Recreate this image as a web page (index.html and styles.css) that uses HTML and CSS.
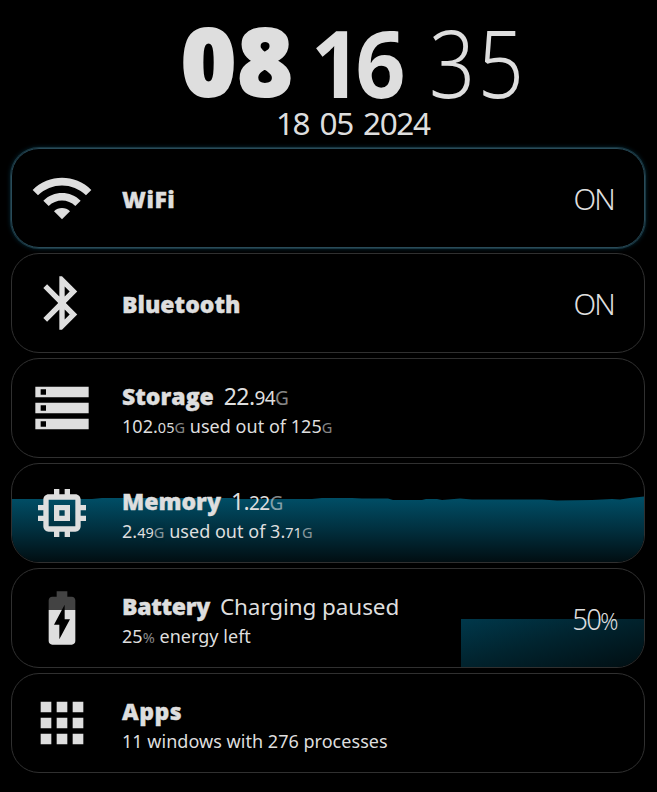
FILE: index.html
```html
<!DOCTYPE html>
<html lang="en">
<head>
<meta charset="utf-8">
<title>System panel</title>
<link rel="stylesheet" href="styles.css">
</head>
<body>
<header class="clock">
  <div class="time"><span class="hours">08</span><span class="minutes">16</span><span class="seconds">35</span></div>
  <div class="date">18 05 2024</div>
</header>
<main class="cards">
  <section class="card active">
    <svg class="icon" viewBox="0 0 24 24"><path d="M1 9l2 2c4.97-4.97 13.03-4.97 18 0l2-2C16.93 2.93 7.08 2.93 1 9zm8 8l3 3 3-3c-1.65-1.66-4.34-1.66-6 0zm-4-4l2 2c2.76-2.76 7.24-2.76 10 0l2-2C15.14 9.14 8.87 9.14 5 13z"/></svg>
    <div class="info"><div class="line"><b class="wifi">WiFi</b></div></div>
    <div class="state">ON</div>
  </section>
  <section class="card">
    <svg class="icon" viewBox="0 0 24 24"><path d="M17.71 7.71L12 2h-1v7.59L6.41 5 5 6.41 10.59 12 5 17.59 6.41 19 11 14.41V22h1l5.71-5.71-4.3-4.29 4.3-4.29zM13 5.83l1.88 1.88L13 9.59V5.83zm1.88 10.46L13 18.17v-3.76l1.88 1.88z"/></svg>
    <div class="info"><div class="line"><b class="bluetooth">Bluetooth</b></div></div>
    <div class="state">ON</div>
  </section>
  <section class="card">
    <svg class="icon" viewBox="0 0 24 24"><path d="M2 20h20v-4H2v4zm2-3h2v2H4v-2zM2 4v4h20V4H2zm4 3H4V5h2v2zm-4 7h20v-4H2v4zm2-3h2v2H4v-2z"/></svg>
    <div class="info">
      <div class="line"><b class="storage">Storage</b><span class="value">22.<small>94<i>G</i></small></span></div>
      <div class="detail">102.<small>05<i>G</i></small> used out of 125<small><i>G</i></small></div>
    </div>
  </section>
  <section class="card">
    <svg class="graph" viewBox="0 0 632 98" preserveAspectRatio="none">
      <defs><linearGradient id="memory-fill" x1="0" y1="34" x2="0" y2="98" gradientUnits="userSpaceOnUse"><stop offset="0" stop-color="#004e66"/><stop offset=".5" stop-color="#012f3e"/><stop offset="1" stop-color="#010e12"/></linearGradient></defs>
      <path fill="url(#memory-fill)" d="M0 35H80L90 34H220L224 35H300L310 34H340L350 34.5H376L381 36H410L414 35H425L430 36L448 34.5L460 35.5H530L545 36.5L580 36L600 35L608 35.5L618 34L632 32.500V98H0Z"/>
    </svg>
    <svg class="icon" viewBox="0 0 24 24"><path d="M15 9H9v6h6V9zm-2 4h-2v-2h2v2zm8-2V9h-2V7c0-1.100-.9-2-2-2h-2V3h-2v2h-2V3H9v2H7c-1.100 0-2 .9-2 2v2H3v2h2v2H3v2h2v2c0 1.100.9 2 2 2h2v2h2v-2h2v2h2v-2h2c1.100 0 2-.9 2-2v-2h2v-2h-2v-2h2zm-4 6H7V7h10v10z"/></svg>
    <div class="info">
      <div class="line"><b class="memory">Memory</b><span class="value">1.<small>22<i>G</i></small></span></div>
      <div class="detail">2.<small>49<i>G</i></small> used out of 3.<small>71<i>G</i></small></div>
    </div>
  </section>
  <section class="card">
    <div class="level"></div>
    <svg class="icon" viewBox="0 0 24 24"><path opacity=".3" d="M15.670 4H14V2h-4v2H8.330C7.600 4 7 4.600 7 5.330V9h4.930L13 7v2h4V5.330C17 4.600 16.400 4 15.670 4z"/><path d="M13 12.500h2L11 20v-5.500H9L11.930 9H7v11.670C7 21.400 7.600 22 8.330 22h7.330c.74 0 1.340-.6 1.340-1.330V9h-4v3.500z"/></svg>
    <div class="info">
      <div class="line"><b class="battery">Battery</b><span class="value words">Charging paused</span></div>
      <div class="detail">25<small><i>%</i></small> energy left</div>
    </div>
    <div class="state percent">50<small>%</small></div>
  </section>
  <section class="card">
    <svg class="icon" viewBox="0 0 24 24"><path d="M4 8h4V4H4v4zm6 12h4v-4h-4v4zm-6 0h4v-4H4v4zm0-6h4v-4H4v4zm6 0h4v-4h-4v4zm6-10v4h4V4h-4zm-6 4h4V4h-4v4zm6 6h4v-4h-4v4zm0 6h4v-4h-4v4z"/></svg>
    <div class="info">
      <div class="line"><b class="apps">Apps</b></div>
      <div class="detail">11 windows with 276 processes</div>
    </div>
  </section>
</main>
</body>
</html>
```
FILE: styles.css
```css
* { box-sizing: border-box; }
body { margin: 0; height: 792px; background: #000; color: #dedede; font-family: "Noto Sans", "Open Sans", sans-serif; }
.clock { height: 148px; padding-top: 10px; }
.time { display: flex; height: 95px; padding-left: 181px; font-size: 94px; line-height: 104px; }
.time span { flex: none; white-space: nowrap; }
.hours { width: 130px; margin-top: -2px; font-family: "Open Sans", sans-serif; font-weight: 800; letter-spacing: 1.500px; -webkit-text-stroke: 2px #dedede; }
.minutes { width: 118px; font-weight: 700; letter-spacing: -6px; transform: scaleX(.93); transform-origin: left; }
.seconds { font-weight: 300; letter-spacing: 3px; transform: scaleX(.86); transform-origin: left; }
.date { height: 36px; padding-left: 276px; font-size: 31.500px; line-height: 36px; font-weight: 400; letter-spacing: -1.400px; word-spacing: 3.500px; white-space: nowrap; }
.cards { display: grid; gap: 5px; padding: 0 12px 0 11px; }
.card { position: relative; display: flex; align-items: center; height: 100px; padding: 0 30px 0 18px; border: 1px solid #303030; border-radius: 28px; overflow: hidden; }
.active { border-color: #294b59; box-shadow: 0 0 0 1px #193640, 0 0 5px #07384b; }
.icon { position: relative; width: 64px; height: 64px; flex: none; fill: #dedede; }
.info { position: relative; flex: 1; margin-left: 28px; padding-top: 2px; white-space: nowrap; }
.line { height: 32px; font-size: 24px; line-height: 32px; }
.line b { font-family: "Open Sans", sans-serif; font-size: 23px; font-weight: 800; -webkit-text-stroke: .4px #dedede; }
.line .wifi, .line .apps { letter-spacing: .5px; }
.line .battery { letter-spacing: -.3px; }
.value { margin-left: 10px; font-size: 23px; font-weight: 400; letter-spacing: -.6px; }
.value small { font-size: 19px; }
.line .words { font-size: 22.500px; letter-spacing: -.1px; }
.detail { height: 26px; font-size: 18px; line-height: 28px; font-weight: 400; letter-spacing: .03px; }
.detail small { font-size: 14.500px; }
small i { font-style: normal; font-weight: 400; opacity: .6; }
.state { position: relative; padding-top: 2px; font-size: 29.500px; font-weight: 300; line-height: 40px; letter-spacing: -1.800px; }
.percent small { font-size: 24px; }
.percent { padding-top: 4px; margin-right: -3px; transform: scaleX(.93); transform-origin: right; }
.graph { position: absolute; inset: 0; width: 100%; height: 100%; }
.level { position: absolute; right: 0; bottom: 0; width: 183px; height: 48px; background: linear-gradient(165deg, #00384b, #01242f 45%, #010e12); }
```
